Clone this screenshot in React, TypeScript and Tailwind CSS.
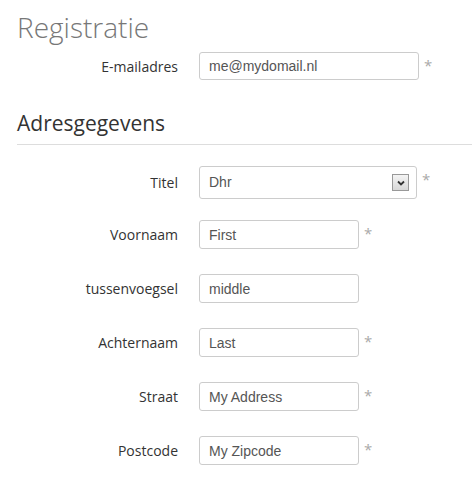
import React from 'react';

const Star = () => <span className="ml-[5px] mt-[6px] text-[15px] leading-none text-[#aaa] self-start">*</span>;

const Row = ({ label, value, wide, required = true }: { label: string; value: string; wide?: boolean; required?: boolean }) => (
  <div className="flex items-center">
    <label className="w-[178px] text-right text-[14px] text-[#333]" style={{ fontFamily: '"Open Sans", sans-serif' }}>
      {label}
    </label>
    <div className="ml-[21px] flex">
      <input
        readOnly
        value={value}
        className={`${wide ? 'w-[220px] h-[28px]' : 'w-[160px] h-[29px]'} rounded-[3px] border border-[#ccc] bg-white px-[9px] text-[14px] text-[#555] outline-none`}
        style={{ fontFamily: '"Liberation Sans", Arial, sans-serif' }}
      />
      {required ? <Star /> : null}
    </div>
  </div>
);

export default function App() {
  return (
    <div className="w-[472px] h-[478px] bg-white overflow-hidden" style={{ fontFamily: '"Open Sans", sans-serif' }}>
      <h1 className="pl-[17px] pt-[9px] text-[28px] leading-[36px] font-light text-[#777]">Registratie</h1>
      <div className="mt-[7px]">
        <Row label="E-mailadres" value="me@mydomail.nl" wide />
      </div>
      <h2 className="mt-[28px] ml-[17px] pb-[6px] border-b border-[#ddd] text-[21px] leading-[30px] text-[#333]">Adresgegevens</h2>

      <div className="mt-[21px] flex items-center">
        <label className="w-[178px] text-right text-[14px] text-[#333]">Titel</label>
        <div className="ml-[21px] flex">
          <div className="relative flex h-[33px] w-[218px] items-center rounded-[3px] border border-[#ccc] bg-white px-[9px] text-[14px] text-[#555]" style={{ fontFamily: '"Liberation Sans", Arial, sans-serif' }}>
            Dhr
            <span className="absolute right-[7px] top-[7px] flex h-[17px] w-[17px] items-center justify-center border border-[#999] bg-gradient-to-b from-[#f4f4f4] to-[#d8d8d8]">
              <svg width="8" height="6" viewBox="0 0 8 6">
                <path d="M1 1.5 L4 4.5 L7 1.5" fill="none" stroke="#333" strokeWidth="1.8" />
              </svg>
            </span>
          </div>
          <Star />
        </div>
      </div>

      <div className="mt-[21px] flex flex-col gap-[25px]">
        <Row label="Voornaam" value="First" />
        <Row label="tussenvoegsel" value="middle" required={false} />
        <Row label="Achternaam" value="Last" />
        <Row label="Straat" value="My Address" />
        <Row label="Postcode" value="My Zipcode" />
      </div>
    </div>
  );
}
